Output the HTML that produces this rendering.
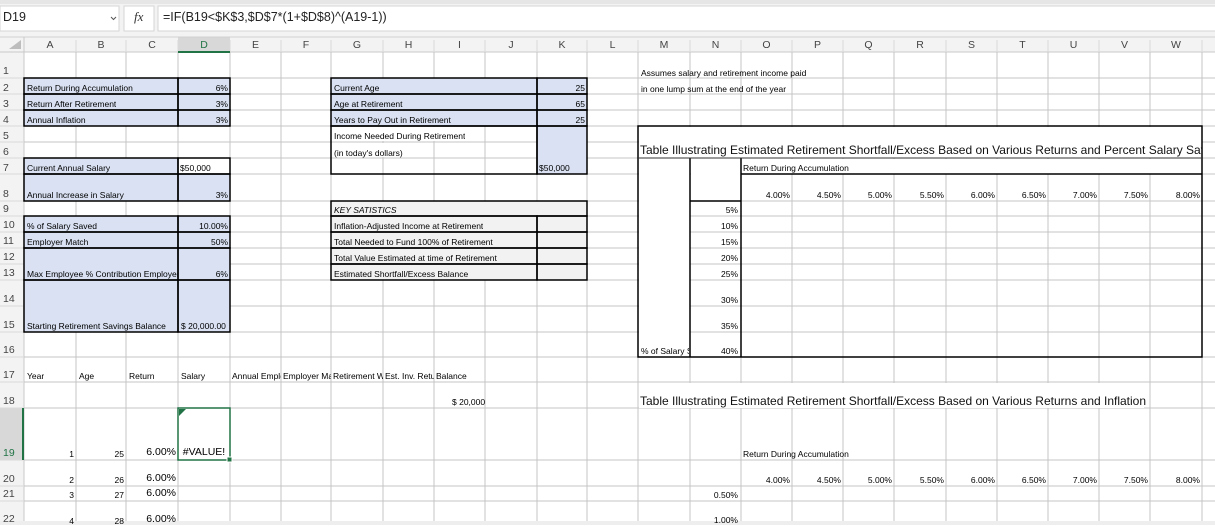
<!DOCTYPE html>
<html><head><meta charset="utf-8"><style>
*{margin:0;padding:0;box-sizing:border-box}
body{width:1215px;height:525px;overflow:hidden;background:#fff;position:relative;font-family:"Liberation Sans",sans-serif;color:#111}
.c{position:absolute;font-size:8.5px;line-height:9px;white-space:nowrap;overflow:hidden;color:#000}
.r{text-align:right}
.b{font-size:10.5px;line-height:12px}
.t{position:absolute;font-size:12px;line-height:14px;white-space:nowrap;color:#111}
.rn{position:absolute;left:0;width:22px;font-size:10.5px;line-height:12px;color:#444;padding-left:3px}
.ch{position:absolute;top:38px;font-size:10.5px;line-height:14px;color:#444;text-align:center}
</style></head><body>
<svg width="1215" height="525" style="position:absolute;left:0;top:0">
<rect x="0" y="0" width="1215" height="52" fill="#f3f3f3"/>
<rect x="0" y="0" width="1215" height="4" fill="#e6e6e6"/>
<rect x="0" y="52" width="24" height="473" fill="#f3f3f3"/>
<rect x="178" y="37" width="52" height="15" fill="#d8d8d8"/>
<rect x="0" y="408" width="24" height="52" fill="#d8d8d8"/>
<line x1="0" y1="37" x2="1215" y2="37" stroke="#d0d0d0"/>
<line x1="0" y1="52" x2="1215" y2="52" stroke="#c8c8c8"/>
<line x1="24" y1="37" x2="24" y2="525" stroke="#c8c8c8"/>
<polygon points="9,49 21,49 21,40" fill="#bdbdbd"/>
<g stroke="#dadada">
<line x1="76" y1="40" x2="76" y2="52"/><line x1="126" y1="40" x2="126" y2="52"/><line x1="178" y1="40" x2="178" y2="52"/><line x1="230" y1="40" x2="230" y2="52"/><line x1="281" y1="40" x2="281" y2="52"/><line x1="331" y1="40" x2="331" y2="52"/><line x1="383" y1="40" x2="383" y2="52"/><line x1="434" y1="40" x2="434" y2="52"/><line x1="485" y1="40" x2="485" y2="52"/><line x1="537" y1="40" x2="537" y2="52"/><line x1="587" y1="40" x2="587" y2="52"/><line x1="638" y1="40" x2="638" y2="52"/><line x1="690" y1="40" x2="690" y2="52"/><line x1="741" y1="40" x2="741" y2="52"/><line x1="792" y1="40" x2="792" y2="52"/><line x1="843" y1="40" x2="843" y2="52"/><line x1="894" y1="40" x2="894" y2="52"/><line x1="946" y1="40" x2="946" y2="52"/><line x1="997" y1="40" x2="997" y2="52"/><line x1="1048" y1="40" x2="1048" y2="52"/><line x1="1099" y1="40" x2="1099" y2="52"/><line x1="1150" y1="40" x2="1150" y2="52"/><line x1="1202" y1="40" x2="1202" y2="52"/>
</g>
<g stroke="#dadada">
<line x1="0" y1="78" x2="24" y2="78"/><line x1="0" y1="94" x2="24" y2="94"/><line x1="0" y1="110" x2="24" y2="110"/><line x1="0" y1="126" x2="24" y2="126"/><line x1="0" y1="142" x2="24" y2="142"/><line x1="0" y1="158" x2="24" y2="158"/><line x1="0" y1="174" x2="24" y2="174"/><line x1="0" y1="201" x2="24" y2="201"/><line x1="0" y1="216" x2="24" y2="216"/><line x1="0" y1="232" x2="24" y2="232"/><line x1="0" y1="248" x2="24" y2="248"/><line x1="0" y1="264" x2="24" y2="264"/><line x1="0" y1="280" x2="24" y2="280"/><line x1="0" y1="306" x2="24" y2="306"/><line x1="0" y1="332" x2="24" y2="332"/><line x1="0" y1="357" x2="24" y2="357"/><line x1="0" y1="382" x2="24" y2="382"/><line x1="0" y1="408" x2="24" y2="408"/><line x1="0" y1="460" x2="24" y2="460"/><line x1="0" y1="486" x2="24" y2="486"/><line x1="0" y1="501" x2="24" y2="501"/>
</g>
<g stroke="#c4c4c4">
<line x1="76" y1="52" x2="76" y2="525"/><line x1="126" y1="52" x2="126" y2="525"/><line x1="178" y1="52" x2="178" y2="525"/><line x1="230" y1="52" x2="230" y2="525"/><line x1="281" y1="52" x2="281" y2="525"/><line x1="331" y1="52" x2="331" y2="525"/><line x1="383" y1="52" x2="383" y2="525"/><line x1="434" y1="52" x2="434" y2="525"/><line x1="485" y1="52" x2="485" y2="525"/><line x1="537" y1="52" x2="537" y2="525"/><line x1="587" y1="52" x2="587" y2="525"/><line x1="638" y1="52" x2="638" y2="525"/><line x1="690" y1="52" x2="690" y2="525"/><line x1="741" y1="52" x2="741" y2="525"/><line x1="792" y1="52" x2="792" y2="525"/><line x1="843" y1="52" x2="843" y2="525"/><line x1="894" y1="52" x2="894" y2="525"/><line x1="946" y1="52" x2="946" y2="525"/><line x1="997" y1="52" x2="997" y2="525"/><line x1="1048" y1="52" x2="1048" y2="525"/><line x1="1099" y1="52" x2="1099" y2="525"/><line x1="1150" y1="52" x2="1150" y2="525"/><line x1="1202" y1="52" x2="1202" y2="525"/>
<line x1="24" y1="78" x2="1215" y2="78"/><line x1="24" y1="94" x2="1215" y2="94"/><line x1="24" y1="110" x2="1215" y2="110"/><line x1="24" y1="126" x2="1215" y2="126"/><line x1="24" y1="142" x2="1215" y2="142"/><line x1="24" y1="158" x2="1215" y2="158"/><line x1="24" y1="174" x2="1215" y2="174"/><line x1="24" y1="201" x2="1215" y2="201"/><line x1="24" y1="216" x2="1215" y2="216"/><line x1="24" y1="232" x2="1215" y2="232"/><line x1="24" y1="248" x2="1215" y2="248"/><line x1="24" y1="264" x2="1215" y2="264"/><line x1="24" y1="280" x2="1215" y2="280"/><line x1="24" y1="306" x2="1215" y2="306"/><line x1="24" y1="332" x2="1215" y2="332"/><line x1="24" y1="357" x2="1215" y2="357"/><line x1="24" y1="382" x2="1215" y2="382"/><line x1="24" y1="408" x2="1215" y2="408"/><line x1="24" y1="460" x2="1215" y2="460"/><line x1="24" y1="486" x2="1215" y2="486"/><line x1="24" y1="501" x2="1215" y2="501"/>
</g>
<g fill="#fff">
<rect x="639" y="127" width="563" height="31"/>
<rect x="639" y="158" width="51" height="199"/>
<rect x="691" y="159" width="50" height="42"/>
<rect x="742" y="159" width="460" height="15"/>
<rect x="639" y="383" width="505" height="25"/>
<rect x="332" y="127" width="130" height="14"/>
<rect x="332" y="143" width="70" height="14"/>
</g>
<g fill="#d9e1f2">
<rect x="24" y="78" width="206" height="48"/>
<rect x="24" y="158" width="154" height="16"/>
<rect x="24" y="174" width="206" height="27"/>
<rect x="24" y="216" width="206" height="116"/>
<rect x="331" y="78" width="256" height="48"/>
<rect x="537" y="126" width="50" height="48"/>
</g>
<g fill="#f2f2f2">
<rect x="331" y="201" width="256" height="79"/>
</g>
<g fill="none" stroke="#000" stroke-width="1.5">
<rect x="24" y="78" width="154" height="16"/><rect x="178" y="78" width="52" height="16"/>
<rect x="24" y="94" width="154" height="16"/><rect x="178" y="94" width="52" height="16"/>
<rect x="24" y="110" width="154" height="16"/><rect x="178" y="110" width="52" height="16"/>
<rect x="24" y="158" width="154" height="16"/><rect x="178" y="158" width="52" height="16"/>
<rect x="24" y="174" width="154" height="27"/><rect x="178" y="174" width="52" height="27"/>
<rect x="24" y="216" width="154" height="16"/><rect x="178" y="216" width="52" height="16"/>
<rect x="24" y="232" width="154" height="16"/><rect x="178" y="232" width="52" height="16"/>
<rect x="24" y="248" width="154" height="32"/><rect x="178" y="248" width="52" height="32"/>
<rect x="24" y="280" width="154" height="52"/><rect x="178" y="280" width="52" height="52"/>
<rect x="331" y="78" width="206" height="16"/><rect x="537" y="78" width="50" height="16"/>
<rect x="331" y="94" width="206" height="16"/><rect x="537" y="94" width="50" height="16"/>
<rect x="331" y="110" width="206" height="16"/><rect x="537" y="110" width="50" height="16"/>
<rect x="331" y="126" width="206" height="48"/><rect x="537" y="126" width="50" height="48"/>
<rect x="331" y="201" width="256" height="15"/>
<rect x="331" y="216" width="206" height="16"/><rect x="537" y="216" width="50" height="16"/>
<rect x="331" y="232" width="206" height="16"/><rect x="537" y="232" width="50" height="16"/>
<rect x="331" y="248" width="206" height="16"/><rect x="537" y="248" width="50" height="16"/>
<rect x="331" y="264" width="206" height="16"/><rect x="537" y="264" width="50" height="16"/>
<rect x="638" y="126" width="564" height="231"/>
<line x1="690" y1="158" x2="690" y2="357"/>
<line x1="741" y1="158" x2="741" y2="357"/>
<line x1="741" y1="174" x2="1202" y2="174"/>
<line x1="690" y1="201" x2="741" y2="201"/>
</g>
<line x1="638" y1="158" x2="1202" y2="158" stroke="#333" stroke-width="1"/>
<rect x="178" y="408" width="52" height="52" fill="none" stroke="#217346" stroke-width="1.5"/>
<rect x="227" y="457" width="5" height="5" fill="#217346" stroke="#fff" stroke-width="1"/>
<polygon points="179,409 186,409 179,416" fill="#217346"/>
<line x1="178" y1="52" x2="230" y2="52" stroke="#217346" stroke-width="2"/>
<line x1="23" y1="408" x2="23" y2="460" stroke="#217346" stroke-width="2"/>
<rect x="0" y="6" width="119" height="25" fill="#fff" stroke="#d6d6d6"/>
<rect x="124" y="6" width="30" height="25" fill="#fff" stroke="#d6d6d6"/>
<rect x="158" y="6" width="1060" height="25" fill="#fff" stroke="#d6d6d6"/>
<polyline points="111,17 113.5,19.5 116,17" fill="none" stroke="#555" stroke-width="1"/>
<rect x="0" y="521" width="1215" height="4" fill="#eeeeee"/>
</svg>
<div style="position:absolute;left:3px;top:10px;font-size:12.5px;color:#222">D19</div>
<div style="position:absolute;left:134px;top:9px;font:italic 13px 'Liberation Serif',serif;color:#333">fx</div>
<div style="position:absolute;left:163px;top:10px;font-size:12.5px;color:#222">=IF(B19&lt;$K$3,$D$7*(1+$D$8)^(A19-1))</div>

<div class="ch" style="left:24px;width:52px">A</div><div class="ch" style="left:76px;width:50px">B</div><div class="ch" style="left:126px;width:52px">C</div><div class="ch" style="left:178px;width:52px;color:#217346">D</div><div class="ch" style="left:230px;width:51px">E</div><div class="ch" style="left:281px;width:50px">F</div><div class="ch" style="left:331px;width:52px">G</div><div class="ch" style="left:383px;width:51px">H</div><div class="ch" style="left:434px;width:51px">I</div><div class="ch" style="left:485px;width:52px">J</div><div class="ch" style="left:537px;width:50px">K</div><div class="ch" style="left:587px;width:51px">L</div><div class="ch" style="left:638px;width:52px">M</div><div class="ch" style="left:690px;width:51px">N</div><div class="ch" style="left:741px;width:51px">O</div><div class="ch" style="left:792px;width:51px">P</div><div class="ch" style="left:843px;width:51px">Q</div><div class="ch" style="left:894px;width:52px">R</div><div class="ch" style="left:946px;width:51px">S</div><div class="ch" style="left:997px;width:51px">T</div><div class="ch" style="left:1048px;width:51px">U</div><div class="ch" style="left:1099px;width:51px">V</div><div class="ch" style="left:1150px;width:52px">W</div>

<div class="rn" style="top:65px">1</div><div class="rn" style="top:82px">2</div><div class="rn" style="top:98px">3</div><div class="rn" style="top:114px">4</div><div class="rn" style="top:130px">5</div><div class="rn" style="top:146px">6</div><div class="rn" style="top:162px">7</div><div class="rn" style="top:188px">8</div><div class="rn" style="top:203px">9</div><div class="rn" style="top:219px">10</div><div class="rn" style="top:235px">11</div><div class="rn" style="top:251px">12</div><div class="rn" style="top:267px">13</div><div class="rn" style="top:293px">14</div><div class="rn" style="top:319px">15</div><div class="rn" style="top:344px">16</div><div class="rn" style="top:369px">17</div><div class="rn" style="top:395px">18</div><div class="rn" style="top:447px;color:#217346">19</div><div class="rn" style="top:473px">20</div><div class="rn" style="top:488px">21</div><div class="rn" style="top:513px">22</div>

<div class="c" style="left:27px;top:84px">Return During Accumulation</div><div class="c r" style="left:180px;width:48px;top:84px">6%</div>
<div class="c" style="left:27px;top:100px">Return After Retirement</div><div class="c r" style="left:180px;width:48px;top:100px">3%</div>
<div class="c" style="left:27px;top:116px">Annual Inflation</div><div class="c r" style="left:180px;width:48px;top:116px">3%</div>
<div class="c" style="left:27px;top:164px">Current Annual Salary</div><div class="c" style="left:180px;top:164px">$50,000</div>
<div class="c" style="left:27px;top:191px">Annual Increase in Salary</div><div class="c r" style="left:180px;width:48px;top:191px">3%</div>
<div class="c" style="left:27px;top:222px">% of Salary Saved</div><div class="c r" style="left:180px;width:48px;top:222px">10.00%</div>
<div class="c" style="left:27px;top:238px">Employer Match</div><div class="c r" style="left:180px;width:48px;top:238px">50%</div>
<div class="c" style="left:27px;top:270px;width:151px">Max Employee % Contribution Employer</div><div class="c r" style="left:180px;width:48px;top:270px">6%</div>
<div class="c" style="left:27px;top:322px">Starting Retirement Savings Balance</div><div class="c" style="left:181px;top:322px">$ 20,000.00</div>

<div class="c" style="left:27px;top:372px">Year</div><div class="c" style="left:79px;top:372px">Age</div><div class="c" style="left:129px;top:372px">Return</div><div class="c" style="left:181px;top:372px">Salary</div>
<div class="c" style="left:232px;top:372px;width:49px">Annual Employee</div><div class="c" style="left:283px;top:372px;width:48px">Employer Match</div><div class="c" style="left:333px;top:372px;width:50px">Retirement Withdrawal</div><div class="c" style="left:385px;top:372px;width:49px">Est. Inv. Return</div><div class="c" style="left:436px;top:372px">Balance</div>
<div class="c" style="left:452px;top:398px">$ 20,000</div>

<div class="c r" style="left:26px;width:48px;top:450px">1</div><div class="c r" style="left:78px;width:46px;top:450px">25</div><div class="c r b" style="left:128px;width:48px;top:446px">6.00%</div>
<div class="c b" style="left:178px;width:52px;top:446px;text-align:center">#VALUE!</div>
<div class="c r" style="left:26px;width:48px;top:476px">2</div><div class="c r" style="left:78px;width:46px;top:476px">26</div><div class="c r b" style="left:128px;width:48px;top:472px">6.00%</div>
<div class="c r" style="left:26px;width:48px;top:491px">3</div><div class="c r" style="left:78px;width:46px;top:491px">27</div><div class="c r b" style="left:128px;width:48px;top:487px">6.00%</div>
<div class="c r" style="left:26px;width:48px;top:517px">4</div><div class="c r" style="left:78px;width:46px;top:517px">28</div><div class="c r b" style="left:128px;width:48px;top:513px">6.00%</div>

<div class="c" style="left:334px;top:84px">Current Age</div><div class="c r" style="left:539px;width:46px;top:84px">25</div>
<div class="c" style="left:334px;top:100px">Age at Retirement</div><div class="c r" style="left:539px;width:46px;top:100px">65</div>
<div class="c" style="left:334px;top:116px">Years to Pay Out in Retirement</div><div class="c r" style="left:539px;width:46px;top:116px">25</div>
<div class="c" style="left:334px;top:132px">Income Needed During Retirement</div>
<div class="c" style="left:334px;top:149px">(in today's dollars)</div>
<div class="c" style="left:539px;top:164px">$50,000</div>
<div class="c" style="left:334px;top:206px;font-style:italic">KEY SATISTICS</div>
<div class="c" style="left:334px;top:222px">Inflation-Adjusted Income at Retirement</div>
<div class="c" style="left:334px;top:238px">Total Needed to Fund 100% of Retirement</div>
<div class="c" style="left:334px;top:254px">Total Value Estimated at time of Retirement</div>
<div class="c" style="left:334px;top:270px">Estimated Shortfall/Excess Balance</div>

<div class="c" style="left:641px;top:69px">Assumes salary and retirement income paid</div>
<div class="c" style="left:641px;top:85px">in one lump sum at the end of the year</div>
<div class="t" style="left:640px;top:143px;width:562px;overflow:hidden">Table Illustrating Estimated Retirement Shortfall/Excess Based on Various Returns and Percent Salary Saved</div>
<div class="c" style="left:743px;top:164px">Return During Accumulation</div>
<div class="c r" style="left:741px;width:49px;top:191px">4.00%</div><div class="c r" style="left:792px;width:49px;top:191px">4.50%</div><div class="c r" style="left:843px;width:49px;top:191px">5.00%</div><div class="c r" style="left:894px;width:50px;top:191px">5.50%</div><div class="c r" style="left:946px;width:49px;top:191px">6.00%</div><div class="c r" style="left:997px;width:49px;top:191px">6.50%</div><div class="c r" style="left:1048px;width:49px;top:191px">7.00%</div><div class="c r" style="left:1099px;width:49px;top:191px">7.50%</div><div class="c r" style="left:1150px;width:50px;top:191px">8.00%</div>
<div class="c r" style="left:691px;width:47px;top:206px">5%</div>
<div class="c r" style="left:691px;width:47px;top:222px">10%</div>
<div class="c r" style="left:691px;width:47px;top:238px">15%</div>
<div class="c r" style="left:691px;width:47px;top:254px">20%</div>
<div class="c r" style="left:691px;width:47px;top:270px">25%</div>
<div class="c r" style="left:691px;width:47px;top:296px">30%</div>
<div class="c r" style="left:691px;width:47px;top:322px">35%</div>
<div class="c r" style="left:691px;width:47px;top:347px">40%</div>
<div class="c" style="left:641px;top:347px;width:48px">% of Salary Saved</div>
<div class="t" style="left:640px;top:394px">Table Illustrating Estimated Retirement Shortfall/Excess Based on Various Returns and Inflation</div>
<div class="c" style="left:743px;top:450px">Return During Accumulation</div>
<div class="c r" style="left:741px;width:49px;top:476px">4.00%</div><div class="c r" style="left:792px;width:49px;top:476px">4.50%</div><div class="c r" style="left:843px;width:49px;top:476px">5.00%</div><div class="c r" style="left:894px;width:50px;top:476px">5.50%</div><div class="c r" style="left:946px;width:49px;top:476px">6.00%</div><div class="c r" style="left:997px;width:49px;top:476px">6.50%</div><div class="c r" style="left:1048px;width:49px;top:476px">7.00%</div><div class="c r" style="left:1099px;width:49px;top:476px">7.50%</div><div class="c r" style="left:1150px;width:50px;top:476px">8.00%</div>
<div class="c r" style="left:691px;width:47px;top:491px">0.50%</div>
<div class="c r" style="left:691px;width:47px;top:516px">1.00%</div>
</body></html>
